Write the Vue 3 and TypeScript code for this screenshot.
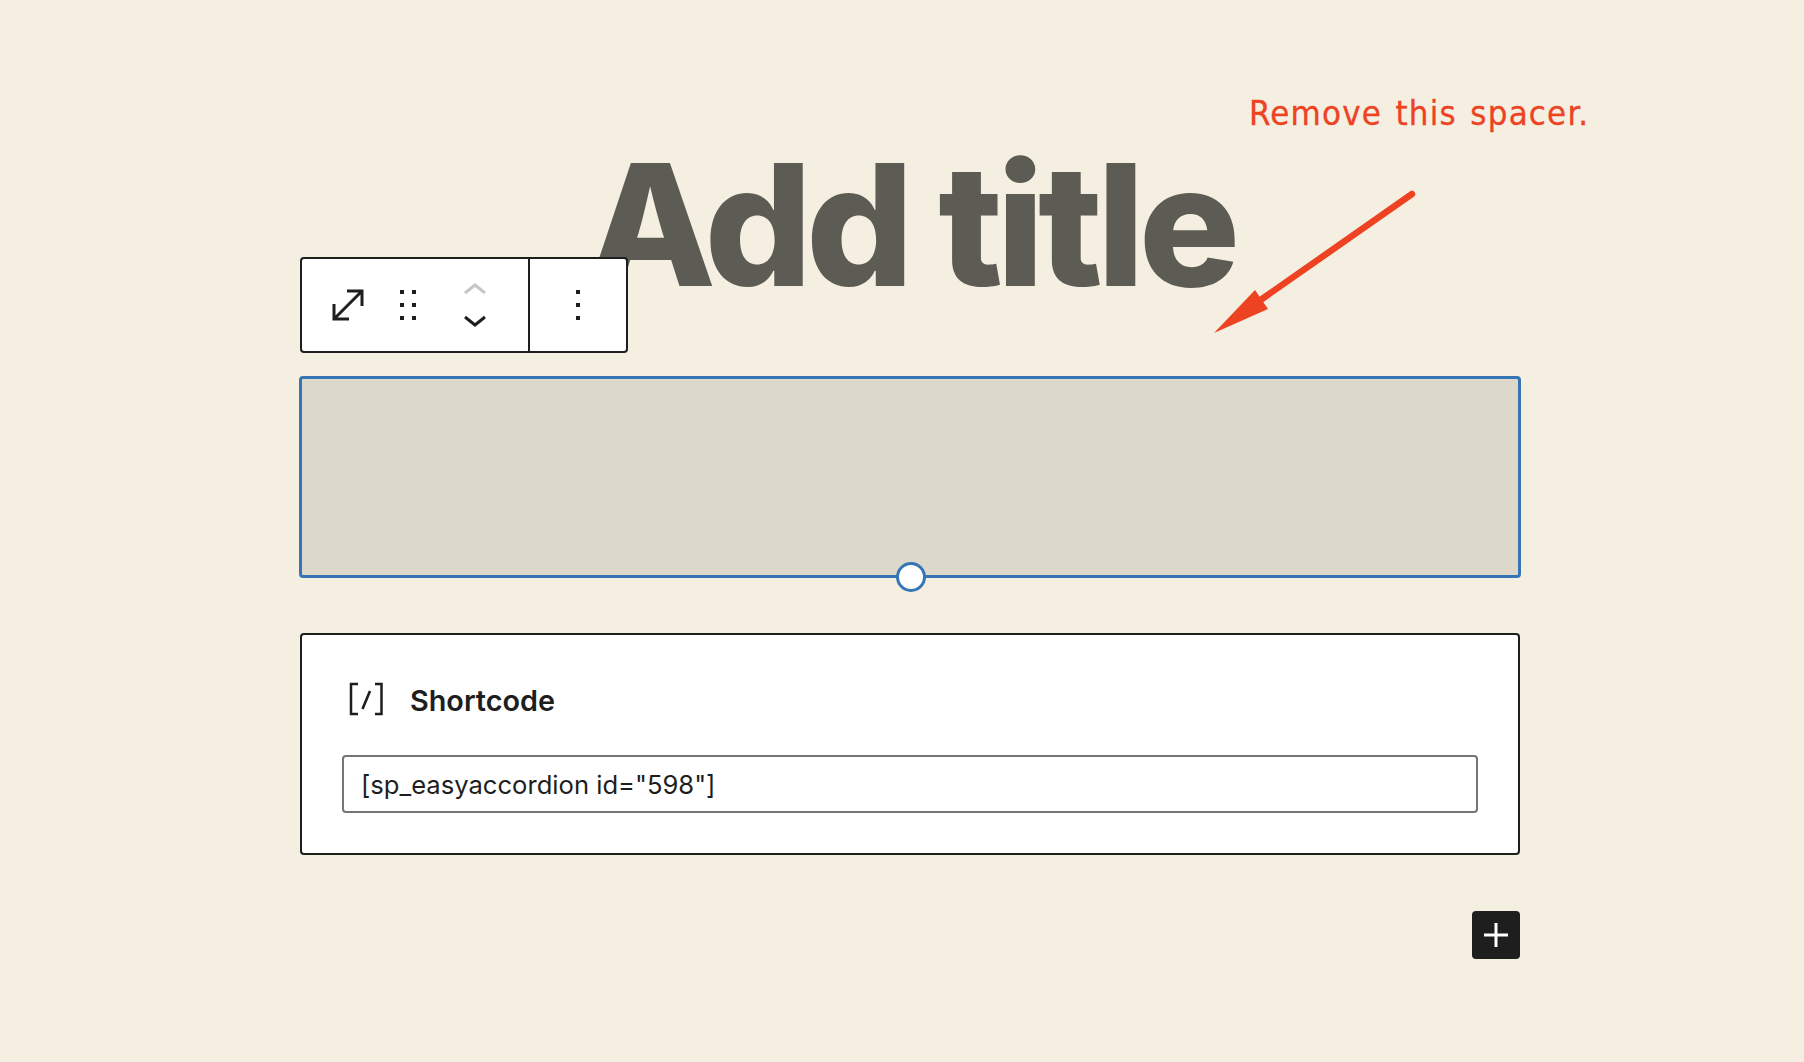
<script setup lang="ts">
const shortcode = '[sp_easyaccordion id="598"]';
const dots: number[][] = [[0, 0], [12, 0], [0, 13], [12, 13], [0, 26], [12, 26]];
</script>

<template>
  <main class="page">
    <div class="note">Remove this spacer.</div>
    <svg class="arrow" width="210" height="150" viewBox="0 0 210 150">
      <path d="M202 4 L52 109" stroke="#ee4323" stroke-width="6.5" stroke-linecap="round" fill="none" />
      <path d="M4 143 L45 100 L58 119 Z" fill="#ee4323" />
    </svg>

    <div class="editor">
      <h1 class="title">Add title</h1>

      <div class="toolbar">
        <div class="tool-group tool-main">
          <svg class="icon-resize" width="34" height="34" viewBox="0 0 34 34">
            <path d="M3 31 L31 3 M16 3 H31 V18 M3 16 V31 H18" stroke="#1e1e1e" stroke-width="3" fill="none" />
          </svg>
          <svg class="icon-drag" width="16" height="30" viewBox="0 0 16 30">
            <rect v-for="(d, i) in dots" :key="i" :x="d[0]" :y="d[1]" width="4" height="4" fill="#1e1e1e" />
          </svg>
          <div class="movers">
            <svg width="24" height="13" viewBox="0 0 24 13">
              <path d="M2 11 L12 3 L22 11" stroke="#c6c6c6" stroke-width="3" fill="none" />
            </svg>
            <svg width="24" height="13" viewBox="0 0 24 13">
              <path d="M2 2 L12 10 L22 2" stroke="#1e1e1e" stroke-width="3" fill="none" />
            </svg>
          </div>
        </div>
        <div class="tool-group tool-more">
          <svg width="4" height="30" viewBox="0 0 4 30">
            <rect y="0" width="4" height="4" fill="#1e1e1e" />
            <rect y="13" width="4" height="4" fill="#1e1e1e" />
            <rect y="26" width="4" height="4" fill="#1e1e1e" />
          </svg>
        </div>
      </div>

      <div class="spacer-block">
        <span class="spacer-handle"></span>
      </div>

      <section class="shortcode-card">
        <div class="shortcode-label">
          <svg width="34" height="34" viewBox="0 0 34 34">
            <path d="M9 2 H2 V32 H9 M26 2 H32.5 V32 H26" stroke="#1e1e1e" stroke-width="2.5" fill="none" />
            <path d="M21 9 L13.5 27" stroke="#1e1e1e" stroke-width="2.6" fill="none" />
          </svg>
          <span class="shortcode-name">Shortcode</span>
        </div>
        <div class="shortcode-input">{{ shortcode }}</div>
      </section>

      <div class="inserter-row">
        <button class="inserter" type="button" aria-label="Add block">
          <svg width="24" height="24" viewBox="0 0 24 24">
            <path d="M0 12 H24 M12 0 V24" stroke="#fff" stroke-width="3" fill="none" />
          </svg>
        </button>
      </div>
    </div>
  </main>
</template>

<style scoped>
.page {
  position: relative;
  height: 1062px;
  padding-left: 300px;
  box-sizing: border-box;
  overflow: hidden;
  font-family: Inter, "Liberation Sans", sans-serif;
  color: #1e1e1e;
}

.editor {
  position: relative;
  width: 1220px;
  padding-top: 90px;
}

.title {
  margin: 0;
  height: 286px;
  font-size: 169px;
  font-weight: 800;
  line-height: 269px;
  letter-spacing: -0.037em;
  text-align: center;
  color: #5c5b54;
}

.note {
  position: absolute;
  left: 1249px;
  top: 91px;
  font-family: "DejaVu Sans", sans-serif;
  font-stretch: condensed;
  font-size: 34.5px;
  line-height: 44px;
  letter-spacing: 1.2px;
  word-spacing: 2.4px;
  color: #ee4323;
  -webkit-text-stroke: 0.3px #ee4323;
  white-space: nowrap;
}

.arrow {
  position: absolute;
  left: 1210px;
  top: 190px;
}

.toolbar {
  position: absolute;
  left: 0;
  top: 257px;
  display: flex;
  width: 328px;
  height: 96px;
  box-sizing: border-box;
  background: #fff;
  border: 2px solid #1e1e1e;
  border-radius: 4px;
}

.tool-group {
  display: flex;
  align-items: center;
}

.tool-main {
  width: 228px;
  padding-left: 29px;
  box-sizing: border-box;
  border-right: 2px solid #1e1e1e;
}

.icon-drag {
  margin-left: 35px;
}

.movers {
  display: flex;
  flex-direction: column;
  gap: 20px;
  margin-left: 47px;
}

.movers svg,
.tool-group svg {
  display: block;
}

.tool-more {
  flex: 1;
  justify-content: center;
}

.spacer-block {
  position: relative;
  height: 202px;
  margin: 0 -1px;
  box-sizing: border-box;
  background: #dcd8cc;
  border: 3px solid #3575b5;
  border-radius: 4px;
}

.spacer-handle {
  position: absolute;
  left: 50%;
  bottom: -17px;
  width: 30px;
  height: 30px;
  box-sizing: border-box;
  margin-left: -14px;
  background: #fff;
  border: 3px solid #3575b5;
  border-radius: 50%;
}

.shortcode-card {
  margin-top: 55px;
  height: 222px;
  box-sizing: border-box;
  padding: 32px 40px 0;
  background: #fff;
  border: 2px solid #1e1e1e;
  border-radius: 4px;
}

.shortcode-label {
  display: flex;
  align-items: center;
  gap: 27px;
  height: 54px;
  padding-top: 10px;
  padding-left: 7px;
  box-sizing: border-box;
  font-size: 28.8px;
  font-weight: 600;
}

.shortcode-name {
  padding-top: 2px;
}

.shortcode-input {
  margin-top: 34px;
  height: 58px;
  box-sizing: border-box;
  padding-left: 17px;
  border: 2px solid #757575;
  border-radius: 4px;
  font-size: 25.6px;
  line-height: 56px;
}

.inserter-row {
  display: flex;
  justify-content: flex-end;
  margin-top: 56px;
}

.inserter {
  display: flex;
  align-items: center;
  justify-content: center;
  width: 48px;
  height: 48px;
  padding: 0;
  background: #1e1e1e;
  border: 0;
  border-radius: 4px;
}
</style>

<style>
html,
body {
  background: #f5efe1;
}
</style>
